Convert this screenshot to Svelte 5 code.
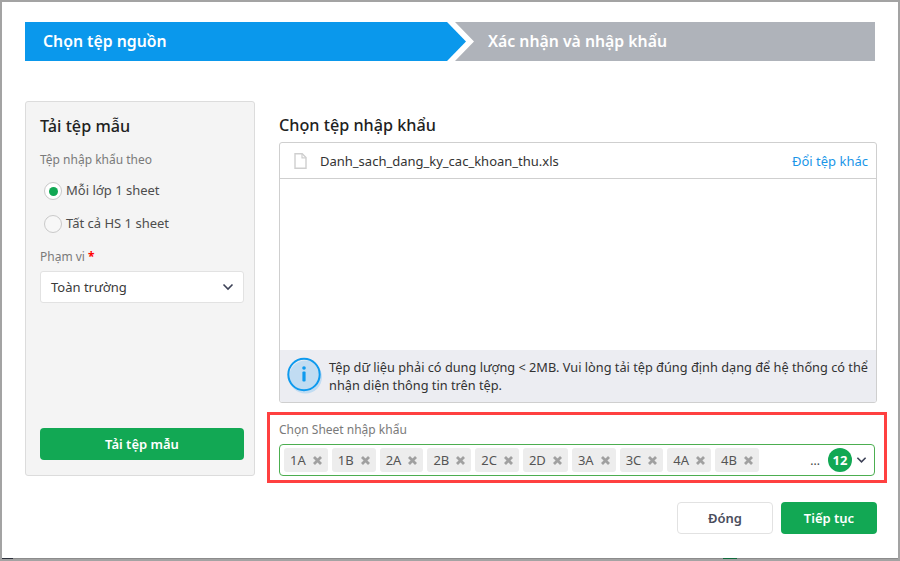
<script>
	const sheets = ['1A', '1B', '2A', '2B', '2C', '2D', '3A', '3C', '4A', '4B'];
</script>

<div class="screen">
	<div class="modal">
		<div class="steps">
			<div class="step active">Chọn tệp nguồn</div>
			<div class="step next">Xác nhận và nhập khẩu</div>
		</div>

		<div class="body">
			<aside class="template">
				<h3>Tải tệp mẫu</h3>
				<div class="caption">Tệp nhập khẩu theo</div>
				<label class="radio">
					<span class="dot on"></span>
					<span class="radiotext">Mỗi lớp 1 sheet</span>
				</label>
				<label class="radio">
					<span class="dot"></span>
					<span class="radiotext">Tất cả HS 1 sheet</span>
				</label>
				<div class="caption scope">Phạm vi <b>*</b></div>
				<div class="select">
					<span>Toàn trường</span>
					<svg width="12" height="8" viewBox="0 0 12 8"><path d="M1.5 1.5 6 6l4.5-4.5" fill="none" stroke="#3d4257" stroke-width="1.6" /></svg>
				</div>
				<button class="btn green wide">Tải tệp mẫu</button>
			</aside>

			<section class="source">
				<h3>Chọn tệp nhập khẩu</h3>
				<div class="filebox">
					<div class="filehead">
						<svg class="fileicon" width="13" height="16" viewBox="0 0 13 16">
							<path d="M1 .8h7.2L12 4.6v10.6H1z" fill="#fff" stroke="#cfcfcf" stroke-width="1.4" />
							<path d="M8 .8v4h4" fill="none" stroke="#cfcfcf" stroke-width="1.2" />
						</svg>
						<span class="filename">Danh_sach_dang_ky_cac_khoan_thu.xls</span>
						<span class="change">Đổi tệp khác</span>
					</div>
					<div class="filespace"></div>
					<div class="notice">
						<svg class="info" width="36" height="38" viewBox="0 0 36 38">
							<circle cx="18.5" cy="20" r="16.5" fill="#c1dcf2" />
							<circle cx="17" cy="17.5" r="15.7" fill="none" stroke="#0e9aee" stroke-width="2" />
							<circle cx="17" cy="11" r="1.8" fill="#0e9aee" />
							<rect x="15.4" y="14.5" width="3.2" height="10" rx="1" fill="#0e9aee" />
						</svg>
						<p>Tệp dữ liệu phải có dung lượng &lt; 2MB. Vui lòng tải tệp đúng định dạng để hệ thống có thể nhận diện thông tin trên tệp.</p>
					</div>
				</div>

				<div class="highlight">
					<div class="caption sheetlabel">Chọn Sheet nhập khẩu</div>
					<div class="tagbox">
						{#each sheets as s}
							<span class="tag">{s}
								<svg width="9" height="9" viewBox="0 0 9 9"><path d="M1 1l7 7M8 1 1 8" stroke="#a0a0a0" stroke-width="2.8" /></svg>
							</span>
						{/each}
						<span class="more">...</span>
						<span class="count">12</span>
						<svg class="chev" width="11" height="8" viewBox="0 0 12 8"><path d="M1.5 1.5 6 6l4.5-4.5" fill="none" stroke="#3d4257" stroke-width="1.7" /></svg>
					</div>
				</div>

				<div class="actions">
					<button class="btn plain">Đóng</button>
					<button class="btn green">Tiếp tục</button>
				</div>
			</section>
		</div>
	</div>
	<!-- bits of the page behind the dialog showing under its bottom edge -->
	<span class="peek dark"></span>
	<span class="peek teal"></span>
</div>

<style>
	:global(body) {
		background: #a3a3a3;
	}

	.screen {
		position: relative;
		width: 900px;
		height: 561px;
		padding: 2px 2px 3px 2px;
		box-sizing: border-box;
		font-family: "Noto Sans", "Open Sans", sans-serif;
		font-size: 13px;
		color: #212121;
		overflow: hidden;
	}

	.peek {
		position: absolute;
		top: 558px;
		height: 1px;
	}

	.peek.dark {
		left: 2px;
		width: 11px;
		background: #2b2f3a;
	}

	.peek.teal {
		left: 723px;
		width: 14px;
		background: #0f6b3c;
	}

	.modal {
		height: 100%;
		background: #fff;
		padding: 20px 21px 0 23px;
		box-sizing: border-box;
		box-shadow: 0 1px 0 #8c8c8c;
	}

	.steps {
		display: flex;
		height: 39px;
		margin-right: 2px;
	}

	.step {
		display: flex;
		align-items: center;
		padding-bottom: 2px;
		box-sizing: border-box;
		color: #fff;
		font-size: 15.8px;
		font-weight: 600;
	}

	.step.active {
		width: 441px;
		flex: none;
		padding-left: 18px;
		background: #0a98ec;
		clip-path: polygon(0 0, 95.7% 0, 100% 50%, 95.7% 100%, 0 100%);
	}

	.step.next {
		flex: 1;
		margin-left: -11px;
		padding-left: 33px;
		background: #afb3ba;
		clip-path: polygon(0 0, 100% 0, 100% 100%, 0 100%, 19px 50%);
	}

	.body {
		display: flex;
		margin-top: 40px;
		gap: 24px;
	}

	h3 {
		margin: 0;
		font-size: 16.2px;
		font-weight: 500;
		line-height: 22px;
	}

	.template {
		width: 230px;
		height: 375px;
		flex: none;
		box-sizing: border-box;
		display: flex;
		flex-direction: column;
		padding: 13px 10px 15px 14px;
		background: #f4f4f4;
		border: 1px solid #dcdcdc;
		border-radius: 3px;
	}

	.caption {
		color: #7a7a7a;
		font-size: 12px;
		line-height: 18px;
	}

	.template .caption {
		margin-top: 14px;
	}

	.radio {
		display: flex;
		align-items: center;
		gap: 4px;
		margin-top: 10px;
		margin-left: 4px;
		height: 24px;
		color: #4d4d4d;
	}

	.radio + .radio {
		margin-top: 9px;
	}

	.radiotext {
		padding-bottom: 2px;
	}

	.dot {
		width: 16px;
		height: 16px;
		border: 1px solid #c9c9c9;
		border-radius: 50%;
		background: #f7f7f7;
		display: flex;
		align-items: center;
		justify-content: center;
	}

	.dot.on {
		background: #fff;
	}

	.dot.on::after {
		content: "";
		width: 9px;
		height: 9px;
		border-radius: 50%;
		background: #12a854;
	}

	.template .scope {
		margin-top: 12px;
	}

	.scope b {
		color: #f00;
		font-weight: 700;
	}

	.select {
		display: flex;
		align-items: center;
		justify-content: space-between;
		height: 32px;
		margin-top: 5px;
		padding: 0 9px 0 10px;
		box-sizing: border-box;
		background: #fff;
		border: 1px solid #e2e2e2;
		border-radius: 3px;
		color: #3a3a3a;
	}

	.btn {
		height: 32px;
		box-sizing: border-box;
		border-radius: 4px;
		font: 600 13px "Noto Sans", "Open Sans", sans-serif;
		border: 1px solid transparent;
		padding: 0;
	}

	.green {
		background: #12a854;
		color: #fff;
	}

	.wide {
		margin-top: auto;
		width: 204px;
	}

	.source {
		width: 598px;
		flex: none;
		margin-top: 13px;
	}

	.source h3 {
		height: 28px;
	}

	.filebox {
		height: 261px;
		box-sizing: border-box;
		display: flex;
		flex-direction: column;
		border: 1px solid #cfcfcf;
		border-radius: 3px;
		overflow: hidden;
	}

	.filehead {
		height: 35px;
		flex: none;
		display: flex;
		align-items: center;
		padding: 0 8px 0 14px;
		border-bottom: 1px solid #cfcfcf;
	}

	.fileicon {
		flex: none;
	}

	.filename {
		margin-left: 13px;
		color: #333;
	}

	.change {
		margin-left: auto;
		color: #1a96e8;
	}

	.filespace {
		flex: 1;
	}

	.notice {
		height: 52px;
		flex: none;
		display: flex;
		align-items: center;
		gap: 6px;
		padding: 0 2px 0 7px;
		background: #ecedf2;
	}

	.info {
		flex: none;
	}

	.notice p {
		margin: 0;
		font-size: 12.75px;
		line-height: 18px;
		color: #333;
	}

	.highlight {
		margin: 9px -10px 0 -12px;
		padding: 6px 9px 5px 9px;
		height: 71px;
		box-sizing: border-box;
		border: 3px solid #ff4040;
	}

	.sheetlabel {
		line-height: 17px;
	}

	.tagbox {
		display: flex;
		align-items: center;
		gap: 4px;
		height: 32px;
		margin-top: 6px;
		padding: 0 7px 0 4px;
		box-sizing: border-box;
		border: 1px solid #4cae50;
		border-radius: 4px;
	}

	.tag {
		display: flex;
		align-items: center;
		gap: 7px;
		height: 24px;
		padding: 0 6px;
		box-sizing: border-box;
		background: #ededed;
		border-radius: 3px;
		color: #555;
	}

	.more {
		margin-left: auto;
		margin-right: 4px;
		font-size: 12px;
		color: #444;
	}

	.count {
		width: 24px;
		height: 24px;
		display: flex;
		align-items: center;
		justify-content: center;
		border-radius: 50%;
		background: #12a854;
		color: #fff;
		font-size: 13px;
		font-weight: 700;
	}

	.chev {
		flex: none;
	}

	.actions {
		display: flex;
		justify-content: flex-end;
		gap: 8px;
		margin-top: 19px;
	}

	.actions .btn {
		width: 96px;
	}

	.plain {
		background: #fff;
		border-color: #e2e2e2;
		color: #4a4d5c;
	}
</style>
